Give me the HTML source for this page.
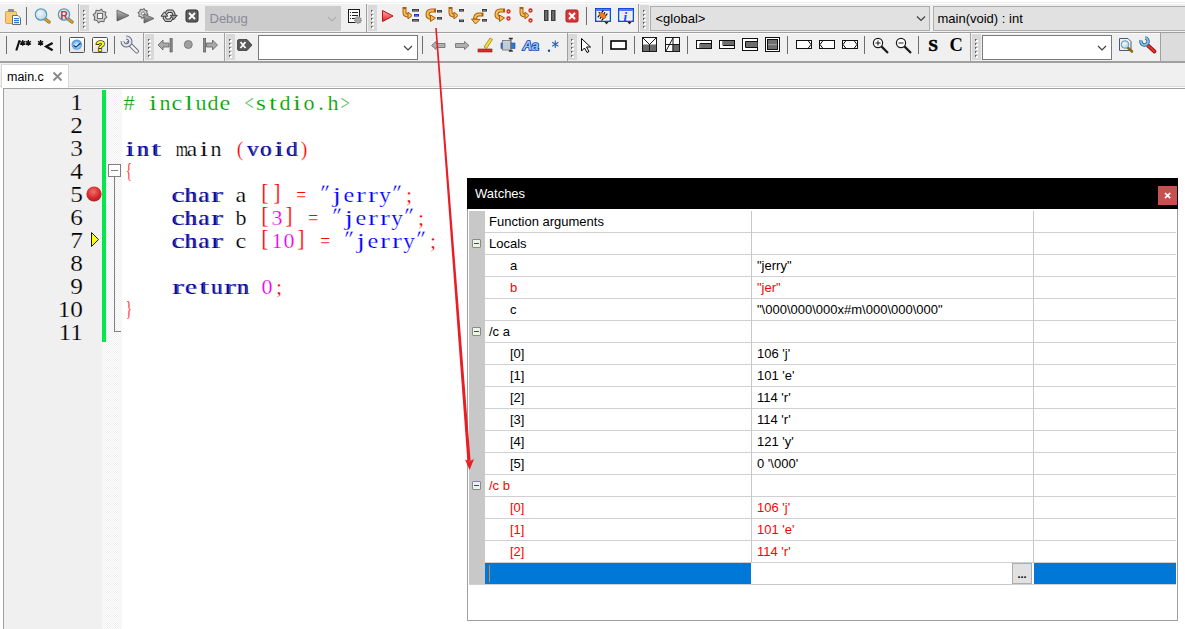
<!DOCTYPE html>
<html><head><meta charset="utf-8">
<style>
*{margin:0;padding:0;box-sizing:border-box}
html,body{width:1185px;height:629px;overflow:hidden;background:#fff;font-family:"Liberation Sans",sans-serif}
.a{position:absolute}
#tb1{position:absolute;left:0;top:4px;width:1185px;height:28px;background:#f0f0f0}
#l1{position:absolute;left:0;top:32px;width:1185px;height:1px;background:#a0a0a0}
#tb2{position:absolute;left:0;top:33px;width:1160px;height:28px;background:#f0f0f0}
#tb2r{position:absolute;left:1160px;top:33px;width:25px;height:28px;background:#dcdcdc}
#l2{position:absolute;left:0;top:61px;width:1185px;height:2px;background:#a0a0a0}
#tabbar{position:absolute;left:0;top:63px;width:1185px;height:25px;background:#f0f0f0}
#tab{position:absolute;left:1px;top:64px;width:68px;height:24px;background:#fff;border:1px solid #d9d9d9;border-bottom:none}
#tab span{position:absolute;left:5px;top:5px;font-size:12.5px;color:#000}
#tab b{position:absolute;left:51px;top:2px;font-size:14px;color:#808080;font-weight:bold}
#ed{position:absolute;left:3px;top:88px;width:1182px;height:541px;background:#fff;border-left:1px solid #a0a0a0;border-top:1px solid #a0a0a0}
#lnm{position:absolute;left:4px;top:89px;width:98px;height:540px;background:#f0f0f0}
#chg{position:absolute;left:102px;top:90px;width:4px;height:252px;background:#00e84a}
#fold{position:absolute;left:102px;top:89px;width:20px;height:540px;background-color:#fff;background-image:repeating-conic-gradient(#efefef 0 25%,#fff 0 50%);background-size:2px 2px}
.cl{position:absolute;left:0;height:23px;width:600px}
.cl i{position:absolute;top:0;width:12px;text-align:center;font-style:normal;font-family:"Liberation Serif",serif;font-size:22px;line-height:23px;-webkit-text-stroke:0.2px #fff}
.ln{position:absolute;left:5px;width:78px;text-align:right;font-family:"Liberation Serif",serif;font-size:22.6px;line-height:23px;color:#000;transform:scaleX(1.12);transform-origin:78px 0;-webkit-text-stroke:0.2px #f0f0f0}
.pp{color:#00a000}
.kw{color:#00009a;text-shadow:0.8px 0 0 #00009a}
.id{color:#000}
.op{color:#ff0000}
.num{color:#f000f0}
.str{color:#0000ff}
.wt{color:#fff;font-size:13px}
.wtx{font-size:13px;color:#000;white-space:pre}
.red{color:#f00}
.hl{left:485px;width:691px;height:1px;background:#d0d0d0}
.fb{width:9px;height:9px;border:1px solid #8a8a8a;background:#f0f0f0;border-radius:1px}
.fb:after{content:"";position:absolute;left:1px;top:3px;width:5px;height:1px;background:#2050a0}
</style></head><body>
<div id="tb1"></div><div id="l1"></div>
<div id="tb2"></div><div id="tb2r"></div><div id="l2"></div>
<div id="tabbar"></div><div class="a" style="left:0;top:86px;width:1185px;height:1px;background:#dadada"></div><div class="a" style="left:0;top:87px;width:1185px;height:1px;background:#fff"></div><div class="a" style="left:1160px;top:33px;width:1px;height:29px;background:#a0a0a0"></div>
<div id="tab"><span>main.c</span><svg class="a" style="left:50px;top:6px" width="12" height="11"><path d="M1.5 1.5 L9.5 9.5 M9.5 1.5 L1.5 9.5" stroke="#8a8a8a" stroke-width="1.9"/></svg></div>
<div id="ed"></div><div id="lnm"></div><div id="fold"></div><div id="chg"></div>

<svg class="a" style="left:0;top:0" width="1185" height="63">
<defs><linearGradient id="gg" x1="0" y1="0" x2="0" y2="1"><stop offset="0" stop-color="#bdbdbd"/><stop offset="1" stop-color="#5a5a5a"/></linearGradient><linearGradient id="rg" x1="0" y1="0" x2="0" y2="1"><stop offset="0" stop-color="#ffb0b0"/><stop offset="1" stop-color="#e02020"/></linearGradient><radialGradient id="mg" cx="0.4" cy="0.4" r="0.6"><stop offset="0" stop-color="#f4f8fb"/><stop offset="1" stop-color="#b8d4e4"/></radialGradient><linearGradient id="bg" x1="0" y1="0" x2="0" y2="1"><stop offset="0" stop-color="#ffffff"/><stop offset="1" stop-color="#e4e4e4"/></linearGradient><radialGradient id="glb" cx="0.5" cy="0.55" r="0.6"><stop offset="0" stop-color="#e8f8ff"/><stop offset="0.45" stop-color="#8cccf4"/><stop offset="1" stop-color="#2a72d0"/></radialGradient></defs>
<rect x="0" y="0" width="1185" height="4" fill="#fff"/><rect x="0" y="2" width="1185" height="1" fill="#eeeeee"/>
<rect x="5.5" y="11.5" width="11" height="12" rx="1" fill="#f5cd73" stroke="#d9a441"/><rect x="8" y="9" width="6" height="3" rx="1" fill="#8e8e8e"/><path d="M12.5 15.5 H18 L20.5 18 V24.5 H12.5 Z" fill="#fff" stroke="#6b6b73"/><rect x="14" y="18" width="5" height="1.2" fill="#2a7ad8"/><rect x="14" y="20" width="5" height="1.2" fill="#2a7ad8"/><rect x="14" y="22" width="5" height="1.2" fill="#2a7ad8"/>
<rect x="26" y="7" width="1" height="18" fill="#6d6d6d"/>
<line x1="44.5" y1="18.5" x2="49" y2="22" stroke="#8a6a10" stroke-width="3.4" stroke-linecap="round"/><line x1="44.5" y1="18.5" x2="49" y2="22" stroke="#c9a43a" stroke-width="2" stroke-linecap="round"/><circle cx="41" cy="14.5" r="5.7" fill="url(#mg)" stroke="#5b9bb8" stroke-width="1.2"/>
<line x1="67.5" y1="18.5" x2="72" y2="22" stroke="#8a6a10" stroke-width="3.4" stroke-linecap="round"/><line x1="67.5" y1="18.5" x2="72" y2="22" stroke="#c9a43a" stroke-width="2" stroke-linecap="round"/><circle cx="64" cy="14.5" r="5.7" fill="url(#mg)" stroke="#5b9bb8" stroke-width="1.2"/>
<text x="60.5" y="18.5" font-family="Liberation Sans" font-weight="bold" font-size="10" fill="#c03838">R</text>
<rect x="78" y="4" width="1" height="28" fill="#a0a0a0"/>
<rect x="80" y="5" width="9" height="26" fill="#d9d9d9"/><rect x="84" y="11" width="2" height="2" fill="#fff"/><path d="M83 10 h2 l-2 2 z" fill="#5a5a5a"/><rect x="83" y="10" width="1" height="1.5" fill="#5a5a5a"/><rect x="84" y="15" width="2" height="2" fill="#fff"/><path d="M83 14 h2 l-2 2 z" fill="#5a5a5a"/><rect x="83" y="14" width="1" height="1.5" fill="#5a5a5a"/><rect x="84" y="19" width="2" height="2" fill="#fff"/><path d="M83 18 h2 l-2 2 z" fill="#5a5a5a"/><rect x="83" y="18" width="1" height="1.5" fill="#5a5a5a"/><rect x="84" y="23" width="2" height="2" fill="#fff"/><path d="M83 22 h2 l-2 2 z" fill="#5a5a5a"/><rect x="83" y="22" width="1" height="1.5" fill="#5a5a5a"/><rect x="84" y="27" width="2" height="2" fill="#fff"/><path d="M83 26 h2 l-2 2 z" fill="#5a5a5a"/><rect x="83" y="26" width="1" height="1.5" fill="#5a5a5a"/>
<polygon points="106.86,17.39 104.48,19.02 103.87,21.83 101.03,21.30 98.61,22.86 96.98,20.48 94.17,19.87 94.70,17.03 93.14,14.61 95.52,12.98 96.13,10.17 98.97,10.70 101.39,9.14 103.02,11.52 105.83,12.13 105.30,14.97" fill="#cfcfcf" stroke="#6e6e6e" stroke-width="1.1" stroke-linejoin="round"/><rect x="97.5" y="13.5" width="5" height="5" fill="#f4f4f4" stroke="#6e6e6e"/>
<path d="M117 10 L129 15.5 L117 21 Z" fill="url(#gg)" stroke="#5a5a5a" stroke-width="0.8"/>
<polygon points="147.90,14.49 146.15,15.62 145.76,17.67 143.73,17.23 142.01,18.40 140.88,16.65 138.83,16.26 139.27,14.23 138.10,12.51 139.85,11.38 140.24,9.33 142.27,9.77 143.99,8.60 145.12,10.35 147.17,10.74 146.73,12.77" fill="#cfcfcf" stroke="#6e6e6e" stroke-width="1.1" stroke-linejoin="round"/><circle cx="143" cy="13.5" r="1.6" fill="#f4f4f4" stroke="#6e6e6e" stroke-width="0.8"/>
<path d="M144 14 L154 18.5 L144 23 Z" fill="url(#gg)" stroke="#5a5a5a" stroke-width="0.8"/>
<path d="M166 13.5 L167.8 11.2 H172.2 L173.8 13.6 V15.5" stroke="#3e3e3e" stroke-width="3.4" fill="none" stroke-linejoin="round"/><path d="M166 13.5 L167.8 11.2 H172.2 L173.8 13.6 V15.5" stroke="#c4c4c4" stroke-width="1.4" fill="none" stroke-linejoin="round"/>
<path d="M172.2 17.5 L170.4 20.3 H166 L164.4 18 V16" stroke="#3e3e3e" stroke-width="3.4" fill="none" stroke-linejoin="round"/><path d="M172.2 17.5 L170.4 20.3 H166 L164.4 18 V16" stroke="#c4c4c4" stroke-width="1.4" fill="none" stroke-linejoin="round"/>
<path d="M170.3 15.3 H177.2 L173.75 19.8 Z" fill="#9a9a9a" stroke="#3e3e3e" stroke-width="1" stroke-linejoin="round"/><path d="M161 16.2 H167.8 L164.4 11.8 Z" fill="#c8c8c8" stroke="#3e3e3e" stroke-width="1" stroke-linejoin="round"/>
<rect x="186" y="10" width="12" height="12" rx="2" fill="#5e5e5e" stroke="#2e2e2e"/><path d="M189 13 L195 19 M195 13 L189 19" stroke="#fff" stroke-width="1.8"/>
<rect x="205" y="6" width="136" height="25" fill="#cccccc"/>
<text x="209.5" y="22.5" font-family="Liberation Sans" font-size="13" fill="#8a8a9a">Debug</text>
<path d="M328 17 L332 21 L336 17" stroke="#b0b0b0" stroke-width="1.2" fill="none"/>
<rect x="348.5" y="9.5" width="11" height="13" fill="#fff" stroke="#1a1a1a"/><rect x="350" y="12" width="1" height="1" fill="#222"/><rect x="352" y="12" width="6" height="1" fill="#222"/><rect x="350" y="15" width="1" height="1" fill="#222"/><rect x="352" y="15" width="6" height="1" fill="#222"/><rect x="350" y="18" width="1" height="1" fill="#222"/><rect x="352" y="18" width="4" height="1" fill="#222"/><circle cx="358" cy="20" r="3.2" fill="#a8a8a8" stroke="#8a8a8a" stroke-width="1.4" stroke-dasharray="1.2 1"/>
<rect x="366" y="4" width="1" height="28" fill="#a0a0a0"/>
<rect x="368" y="5" width="9" height="26" fill="#d9d9d9"/><rect x="372" y="11" width="2" height="2" fill="#fff"/><path d="M371 10 h2 l-2 2 z" fill="#5a5a5a"/><rect x="371" y="10" width="1" height="1.5" fill="#5a5a5a"/><rect x="372" y="15" width="2" height="2" fill="#fff"/><path d="M371 14 h2 l-2 2 z" fill="#5a5a5a"/><rect x="371" y="14" width="1" height="1.5" fill="#5a5a5a"/><rect x="372" y="19" width="2" height="2" fill="#fff"/><path d="M371 18 h2 l-2 2 z" fill="#5a5a5a"/><rect x="371" y="18" width="1" height="1.5" fill="#5a5a5a"/><rect x="372" y="23" width="2" height="2" fill="#fff"/><path d="M371 22 h2 l-2 2 z" fill="#5a5a5a"/><rect x="371" y="22" width="1" height="1.5" fill="#5a5a5a"/><rect x="372" y="27" width="2" height="2" fill="#fff"/><path d="M371 26 h2 l-2 2 z" fill="#5a5a5a"/><rect x="371" y="26" width="1" height="1.5" fill="#5a5a5a"/>
<path d="M382.5 10.5 L393 16 L382.5 21.5 Z" fill="url(#rg)" stroke="#c01010" stroke-width="1"/>
<path d="M404.5 9 V12.5 Q404.5 15.5 408.5 15.5" stroke="#a86008" stroke-width="4" fill="none" stroke-linecap="square" stroke-linejoin="round"/><path d="M404.5 9 V12.5 Q404.5 15.5 408.5 15.5" stroke="#f9be5a" stroke-width="2" fill="none" stroke-linecap="butt" stroke-linejoin="round"/><path d="M408 12 L412 15.5 L408 19 Z" fill="#f9be5a" stroke="#a86008" stroke-width="1" stroke-linejoin="round"/>
<rect x="411.5" y="8.5" width="8" height="3.6" fill="#fff" opacity="0.7"/><rect x="412" y="9" width="7" height="2.6" fill="#3a3a3a"/><rect x="413" y="9.9" width="5" height="0.8" fill="#8a8a8a"/><rect x="413.5" y="13.5" width="6" height="3.6" fill="#fff" opacity="0.7"/><rect x="414" y="14" width="5" height="2.6" fill="#1828e8"/><rect x="415" y="14.9" width="3" height="0.8" fill="#6080ff"/><rect x="411.5" y="18.5" width="8" height="3.6" fill="#fff" opacity="0.7"/><rect x="412" y="19" width="7" height="2.6" fill="#3a3a3a"/><rect x="413" y="19.9" width="5" height="0.8" fill="#8a8a8a"/>
<path d="M434 10.5 H431.5 Q427.5 10.5 427.5 14.5 Q427.5 17.5 431 18" stroke="#a86008" stroke-width="4" fill="none" stroke-linecap="square" stroke-linejoin="round"/><path d="M434 10.5 H431.5 Q427.5 10.5 427.5 14.5 Q427.5 17.5 431 18" stroke="#f9be5a" stroke-width="2" fill="none" stroke-linecap="butt" stroke-linejoin="round"/><path d="M430.5 15 L435.5 18 L430.5 21.5 Z" fill="#f9be5a" stroke="#a86008" stroke-width="1" stroke-linejoin="round"/>
<rect x="436.5" y="9.5" width="6" height="3.6" fill="#fff" opacity="0.7"/><rect x="437" y="10" width="5" height="2.6" fill="#3a3a3a"/><rect x="438" y="10.9" width="3" height="0.8" fill="#8a8a8a"/><rect x="436.5" y="16.5" width="6" height="3.6" fill="#fff" opacity="0.7"/><rect x="437" y="17" width="5" height="2.6" fill="#3a3a3a"/><rect x="438" y="17.9" width="3" height="0.8" fill="#8a8a8a"/>
<path d="M450.5 9 V12.5 Q450.5 15.5 454.5 15.5" stroke="#a86008" stroke-width="4" fill="none" stroke-linecap="square" stroke-linejoin="round"/><path d="M450.5 9 V12.5 Q450.5 15.5 454.5 15.5" stroke="#f9be5a" stroke-width="2" fill="none" stroke-linecap="butt" stroke-linejoin="round"/><path d="M454 12 L458 15.5 L454 19 Z" fill="#f9be5a" stroke="#a86008" stroke-width="1" stroke-linejoin="round"/>
<rect x="458.5" y="8.5" width="6" height="3.6" fill="#fff" opacity="0.7"/><rect x="459" y="9" width="5" height="2.6" fill="#3a3a3a"/><rect x="460" y="9.9" width="3" height="0.8" fill="#8a8a8a"/><rect x="458.5" y="19.0" width="6" height="3.6" fill="#fff" opacity="0.7"/><rect x="459" y="19.5" width="5" height="2.6" fill="#3a3a3a"/><rect x="460" y="20.4" width="3" height="0.8" fill="#8a8a8a"/>
<path d="M481.5 14.5 H479 Q475.5 14.5 475 18.5" stroke="#a86008" stroke-width="4" fill="none" stroke-linecap="square" stroke-linejoin="round"/><path d="M481.5 14.5 H479 Q475.5 14.5 475 18.5" stroke="#f9be5a" stroke-width="2" fill="none" stroke-linecap="butt" stroke-linejoin="round"/><path d="M471.5 19 L480 19.5 L475.5 24 Z" fill="#f9be5a" stroke="#a86008" stroke-width="1" stroke-linejoin="round"/>
<rect x="481.5" y="8.5" width="6" height="3.6" fill="#fff" opacity="0.7"/><rect x="482" y="9" width="5" height="2.6" fill="#3a3a3a"/><rect x="483" y="9.9" width="3" height="0.8" fill="#8a8a8a"/><rect x="481.5" y="18.5" width="6" height="3.6" fill="#fff" opacity="0.7"/><rect x="482" y="19" width="5" height="2.6" fill="#3a3a3a"/><rect x="483" y="19.9" width="3" height="0.8" fill="#8a8a8a"/>
<path d="M503 10.5 H500.5 Q496.5 10.5 496.5 14.5 Q496.5 17.5 500 18" stroke="#a86008" stroke-width="4" fill="none" stroke-linecap="square" stroke-linejoin="round"/><path d="M503 10.5 H500.5 Q496.5 10.5 496.5 14.5 Q496.5 17.5 500 18" stroke="#f9be5a" stroke-width="2" fill="none" stroke-linecap="butt" stroke-linejoin="round"/><path d="M499.5 15 L504.5 18 L499.5 21.5 Z" fill="#f9be5a" stroke="#a86008" stroke-width="1" stroke-linejoin="round"/>
<circle cx="508.5" cy="11.5" r="1.5" fill="#f8e0a0" stroke="#e01818" stroke-width="1.3"/><circle cx="508.5" cy="18.5" r="1.5" fill="#f8e0a0" stroke="#e01818" stroke-width="1.3"/>
<path d="M521.5 9 V12.5 Q521.5 15.5 525.5 15.5" stroke="#a86008" stroke-width="4" fill="none" stroke-linecap="square" stroke-linejoin="round"/><path d="M521.5 9 V12.5 Q521.5 15.5 525.5 15.5" stroke="#f9be5a" stroke-width="2" fill="none" stroke-linecap="butt" stroke-linejoin="round"/><path d="M525 12 L529 15.5 L525 19 Z" fill="#f9be5a" stroke="#a86008" stroke-width="1" stroke-linejoin="round"/>
<circle cx="530.5" cy="10.5" r="1.5" fill="#f8e0a0" stroke="#e01818" stroke-width="1.3"/><circle cx="530.5" cy="20.5" r="1.5" fill="#f8e0a0" stroke="#e01818" stroke-width="1.3"/>
<rect x="544" y="10" width="4.5" height="11" fill="#3a3a3a"/><rect x="545.2" y="11" width="2" height="9" fill="#6e6e6e"/><rect x="551" y="10" width="4.5" height="11" fill="#3a3a3a"/><rect x="552.2" y="11" width="2" height="9" fill="#6e6e6e"/>
<rect x="566" y="10" width="12" height="12" rx="1.5" fill="#d83838" stroke="#b01818"/><path d="M569 13 L575 19 M575 13 L569 19" stroke="#fff" stroke-width="2"/>
<rect x="586" y="7" width="1" height="18" fill="#6d6d6d"/>
<rect x="595.75" y="8.75" width="14.5" height="12.5" fill="#ececec" stroke="#0c4ed8" stroke-width="1.5"/><rect x="597" y="11" width="12" height="9" fill="none" stroke="#fff" stroke-width="0.8"/><rect x="596.5" y="9.5" width="13" height="1.4" fill="#3a60f0"/><path d="M604.5 22 L608.5 22 L606.5 24.5 Z" fill="#222"/>
<rect x="618.75" y="8.75" width="14.5" height="12.5" fill="#ececec" stroke="#0c4ed8" stroke-width="1.5"/><rect x="620" y="11" width="12" height="9" fill="none" stroke="#fff" stroke-width="0.8"/><rect x="619.5" y="9.5" width="13" height="1.4" fill="#3a60f0"/><path d="M627.5 22 L631.5 22 L629.5 24.5 Z" fill="#222"/>
<g transform="rotate(40 602.5 15.5)"><path d="M600 11 V20 M602.5 11.5 V19.5 M605 11 V20 M597.5 15.5 H599" stroke="#111" stroke-width="1.2"/><ellipse cx="602.5" cy="15.5" rx="3.8" ry="2.2" fill="#f08018" stroke="#b05000" stroke-width="0.5"/></g>
<text x="623.5" y="20.5" font-family="Liberation Serif" font-style="italic" font-weight="bold" font-size="13" fill="#2a3cff">i</text>
<rect x="638" y="4" width="1" height="28" fill="#a0a0a0"/>
<rect x="640" y="5" width="9" height="26" fill="#d9d9d9"/><rect x="644" y="11" width="2" height="2" fill="#fff"/><path d="M643 10 h2 l-2 2 z" fill="#5a5a5a"/><rect x="643" y="10" width="1" height="1.5" fill="#5a5a5a"/><rect x="644" y="15" width="2" height="2" fill="#fff"/><path d="M643 14 h2 l-2 2 z" fill="#5a5a5a"/><rect x="643" y="14" width="1" height="1.5" fill="#5a5a5a"/><rect x="644" y="19" width="2" height="2" fill="#fff"/><path d="M643 18 h2 l-2 2 z" fill="#5a5a5a"/><rect x="643" y="18" width="1" height="1.5" fill="#5a5a5a"/><rect x="644" y="23" width="2" height="2" fill="#fff"/><path d="M643 22 h2 l-2 2 z" fill="#5a5a5a"/><rect x="643" y="22" width="1" height="1.5" fill="#5a5a5a"/><rect x="644" y="27" width="2" height="2" fill="#fff"/><path d="M643 26 h2 l-2 2 z" fill="#5a5a5a"/><rect x="643" y="26" width="1" height="1.5" fill="#5a5a5a"/>
<rect x="650.5" y="6.5" width="279" height="24" fill="#e1e1e1" stroke="#adadad"/>
<text x="655.5" y="22.5" font-family="Liberation Sans" font-size="13" fill="#000">&lt;global&gt;</text>
<path d="M917 16.5 L921 20.5 L925 16.5" stroke="#404040" stroke-width="1.2" fill="none"/>
<rect x="933.5" y="6.5" width="260" height="24" fill="#e1e1e1" stroke="#adadad"/>
<text x="937.5" y="22.5" font-family="Liberation Sans" font-size="13" fill="#000">main(void) : int</text>
<rect x="0" y="32" width="1185" height="1" fill="#a0a0a0"/><rect x="0" y="33" width="1160" height="1" fill="#fbfbfb"/>
<rect x="6" y="36" width="1" height="18" fill="#6d6d6d"/>
<path d="M16.3 50.5 L19.6 40.2" stroke="#111" stroke-width="2.1"/><path d="M22.7 39.9 V45.699999999999996 M20.099999999999998 41.3 L25.3 44.3 M25.3 41.3 L20.099999999999998 44.3" stroke="#111" stroke-width="1.35"/><path d="M28.3 39.9 V45.699999999999996 M25.7 41.3 L30.900000000000002 44.3 M30.900000000000002 41.3 L25.7 44.3" stroke="#111" stroke-width="1.35"/><path d="M40.6 39.9 V45.699999999999996 M38.0 41.3 L43.2 44.3 M43.2 41.3 L38.0 44.3" stroke="#111" stroke-width="1.35"/><path d="M52.6 43 L46.2 46.6 L52.6 50.2" stroke="#111" stroke-width="2.3" fill="none"/>
<rect x="60" y="36" width="1" height="18" fill="#6d6d6d"/>
<rect x="69.5" y="37.5" width="15" height="15" rx="1" fill="url(#bg)" stroke="#505050"/><circle cx="76.8" cy="44.6" r="5.2" fill="url(#glb)"/><path d="M73.5 45.5 L76 47 L80.5 43.2" stroke="#1a3a88" stroke-width="1.2" fill="none"/>
<rect x="92.5" y="37.5" width="15" height="15" rx="1" fill="url(#bg)" stroke="#505050"/><text x="95.8" y="51" font-family="Liberation Sans" font-weight="bold" font-size="15" fill="#ffff20" stroke="#3a3a00" stroke-width="1.6" paint-order="stroke">?</text>
<rect x="114" y="36" width="1" height="18" fill="#6d6d6d"/>
<path d="M128.5 43 L136.8 51.3" stroke="#6a6a7a" stroke-width="4.4" stroke-linecap="round"/><path d="M128.5 43 L136.8 51.3" stroke="#f4f4fa" stroke-width="2.4" stroke-linecap="round"/><path d="M126.36 37.60 A3.9 3.9 0 1 1 122.60 41.36" stroke="#6a6a7a" stroke-width="4.2" fill="none"/><path d="M126.36 37.60 A3.9 3.9 0 1 1 122.60 41.36" stroke="#e4e6f4" stroke-width="2.2" fill="none"/>
<rect x="143" y="33" width="1" height="28" fill="#a0a0a0"/>
<rect x="145" y="34" width="9" height="26" fill="#d9d9d9"/><rect x="149" y="40" width="2" height="2" fill="#fff"/><path d="M148 39 h2 l-2 2 z" fill="#5a5a5a"/><rect x="148" y="39" width="1" height="1.5" fill="#5a5a5a"/><rect x="149" y="44" width="2" height="2" fill="#fff"/><path d="M148 43 h2 l-2 2 z" fill="#5a5a5a"/><rect x="148" y="43" width="1" height="1.5" fill="#5a5a5a"/><rect x="149" y="48" width="2" height="2" fill="#fff"/><path d="M148 47 h2 l-2 2 z" fill="#5a5a5a"/><rect x="148" y="47" width="1" height="1.5" fill="#5a5a5a"/><rect x="149" y="52" width="2" height="2" fill="#fff"/><path d="M148 51 h2 l-2 2 z" fill="#5a5a5a"/><rect x="148" y="51" width="1" height="1.5" fill="#5a5a5a"/><rect x="149" y="56" width="2" height="2" fill="#fff"/><path d="M148 55 h2 l-2 2 z" fill="#5a5a5a"/><rect x="148" y="55" width="1" height="1.5" fill="#5a5a5a"/>
<path d="M158 45 L163 40 V43 H169 V47 H163 V50 Z" fill="#a8a8a8" stroke="#606060" stroke-width="0.8"/><rect x="170" y="38.5" width="2.2" height="13.5" fill="#8a8a8a" stroke="#505050" stroke-width="0.6"/>
<circle cx="188.3" cy="44.5" r="4" fill="#a0a0a0" stroke="#707070" stroke-width="0.8"/>
<rect x="203.5" y="38.5" width="2.2" height="13.5" fill="#8a8a8a" stroke="#505050" stroke-width="0.6"/><path d="M217.5 45 L212.5 40 V43 H206.5 V47 H212.5 V50 Z" fill="#a8a8a8" stroke="#606060" stroke-width="0.8"/>
<rect x="224" y="33" width="1" height="28" fill="#a0a0a0"/>
<rect x="226" y="34" width="9" height="26" fill="#d9d9d9"/><rect x="230" y="40" width="2" height="2" fill="#fff"/><path d="M229 39 h2 l-2 2 z" fill="#5a5a5a"/><rect x="229" y="39" width="1" height="1.5" fill="#5a5a5a"/><rect x="230" y="44" width="2" height="2" fill="#fff"/><path d="M229 43 h2 l-2 2 z" fill="#5a5a5a"/><rect x="229" y="43" width="1" height="1.5" fill="#5a5a5a"/><rect x="230" y="48" width="2" height="2" fill="#fff"/><path d="M229 47 h2 l-2 2 z" fill="#5a5a5a"/><rect x="229" y="47" width="1" height="1.5" fill="#5a5a5a"/><rect x="230" y="52" width="2" height="2" fill="#fff"/><path d="M229 51 h2 l-2 2 z" fill="#5a5a5a"/><rect x="229" y="51" width="1" height="1.5" fill="#5a5a5a"/><rect x="230" y="56" width="2" height="2" fill="#fff"/><path d="M229 55 h2 l-2 2 z" fill="#5a5a5a"/><rect x="229" y="55" width="1" height="1.5" fill="#5a5a5a"/>
<path d="M237.5 41 Q237.5 39.5 239 39.5 H247 L252 45 L247 50.5 H239 Q237.5 50.5 237.5 49 Z" fill="#5a5a5a" stroke="#3a3a3a" stroke-width="0.8"/><path d="M240.5 42 L245.5 48 M245.5 42 L240.5 48" stroke="#fff" stroke-width="1.8"/>
<rect x="258.5" y="35.5" width="159" height="24" fill="#fff" stroke="#7a7a7a"/>
<path d="M404 46 L408 50 L412 46" stroke="#404040" stroke-width="1.2" fill="none"/>
<rect x="422" y="36" width="1" height="18" fill="#6d6d6d"/>
<path d="M431.5 45.5 L436 41.5 V43.5 H445 V47.5 H436 V49.5 Z" fill="#b0b0b0" stroke="#6a6a6a" stroke-width="0.8"/>
<path d="M469 45.5 L464.5 41.5 V43.5 H455.5 V47.5 H464.5 V49.5 Z" fill="#b0b0b0" stroke="#6a6a6a" stroke-width="0.8"/>
<path d="M484 47 L490 38 L492.5 39.5 L486.5 48.5 Z" fill="#f4d840" stroke="#9a8a10" stroke-width="0.8"/><rect x="478" y="49" width="14" height="3" fill="#e02828" stroke="#a01010" stroke-width="0.6"/>
<rect x="501" y="43" width="14" height="5.5" fill="#2a7ad8" stroke="#1a4aa0" stroke-width="0.6"/><rect x="502.5" y="40.5" width="8" height="9.5" fill="#c8d0dc" stroke="#6a6a6a" stroke-width="0.8" opacity="0.95"/><path d="M510.8 38.8 V50.6 M508.8 38.5 H512.8 M508.8 51 H512.8" stroke="#303030" stroke-width="1.4"/><path d="M510.8 39.5 V50" stroke="#e0e0e0" stroke-width="0.6"/>
<text x="522.8" y="50.2" font-family="Liberation Sans" font-style="italic" font-weight="bold" font-size="13" fill="#9cc4f4" stroke="#0c3ca8" stroke-width="1.6" paint-order="stroke" letter-spacing="-0.6">Aa</text>
<circle cx="549" cy="50.8" r="1.2" fill="#1a4aa8"/><path d="M555.3 40.5 V48 M552.2 42.3 L558.4 46.2 M558.4 42.3 L552.2 46.2" stroke="#2a62b8" stroke-width="1.1"/>
<rect x="567" y="33" width="1" height="28" fill="#a0a0a0"/>
<rect x="568" y="34" width="9" height="26" fill="#d9d9d9"/><rect x="572" y="40" width="2" height="2" fill="#fff"/><path d="M571 39 h2 l-2 2 z" fill="#5a5a5a"/><rect x="571" y="39" width="1" height="1.5" fill="#5a5a5a"/><rect x="572" y="44" width="2" height="2" fill="#fff"/><path d="M571 43 h2 l-2 2 z" fill="#5a5a5a"/><rect x="571" y="43" width="1" height="1.5" fill="#5a5a5a"/><rect x="572" y="48" width="2" height="2" fill="#fff"/><path d="M571 47 h2 l-2 2 z" fill="#5a5a5a"/><rect x="571" y="47" width="1" height="1.5" fill="#5a5a5a"/><rect x="572" y="52" width="2" height="2" fill="#fff"/><path d="M571 51 h2 l-2 2 z" fill="#5a5a5a"/><rect x="571" y="51" width="1" height="1.5" fill="#5a5a5a"/><rect x="572" y="56" width="2" height="2" fill="#fff"/><path d="M571 55 h2 l-2 2 z" fill="#5a5a5a"/><rect x="571" y="55" width="1" height="1.5" fill="#5a5a5a"/>
<path d="M581.5 38.5 V51 L584.5 48 L587 52.5 L589 51.5 L586.5 47 H590.5 Z" fill="#fff" stroke="#000" stroke-width="1"/>
<rect x="602" y="36" width="1" height="18" fill="#6d6d6d"/>
<rect x="611" y="41" width="15" height="8" fill="#fff" stroke="#000" stroke-width="1.6"/>
<rect x="634" y="36" width="1" height="18" fill="#6d6d6d"/>
<rect x="642.5" y="37.5" width="14" height="14" fill="#fff" stroke="#1a1a1a"/><rect x="643" y="44.5" width="13" height="6.5" fill="#6a6a6a"/><path d="M643 38 L649.5 44.5 L656 38" stroke="#1a1a1a" fill="none"/><rect x="649" y="44" width="1" height="7" fill="#1a1a1a"/>
<rect x="665.5" y="37.5" width="14" height="14" fill="#fff" stroke="#1a1a1a"/><rect x="672.5" y="44.5" width="6.5" height="6.5" fill="#6a6a6a"/><rect x="672.5" y="38" width="1" height="13" fill="#1a1a1a"/><rect x="666" y="44" width="13" height="1" fill="#1a1a1a"/><path d="M666 51 L673 38" stroke="#1a1a1a"/>
<rect x="687" y="36" width="1" height="18" fill="#6d6d6d"/>
<rect x="696.5" y="40.5" width="15" height="8" fill="#fff" stroke="#111"/><path d="M700 48.5 V43.5 H711.5" stroke="#111" fill="none"/><rect x="700.5" y="44" width="10.5" height="4" fill="#6e6e6e"/>
<rect x="719.5" y="40.5" width="15" height="8" fill="#fff" stroke="#111"/><path d="M723 41 V45.5 H734" stroke="#111" fill="none"/><rect x="723.5" y="41" width="10.5" height="4" fill="#6e6e6e"/>
<rect x="742.5" y="38.5" width="15" height="12" fill="#fff" stroke="#111"/><path d="M758 41.5 H745.5 V47.5 H758" stroke="#111" fill="none"/><rect x="746" y="42" width="11.5" height="5" fill="#6e6e6e"/>
<rect x="765.5" y="37.5" width="14" height="14" fill="#fff" stroke="#111"/><rect x="767.5" y="39.5" width="10" height="10" fill="#6e6e6e" stroke="#111"/><rect x="768" y="44" width="9" height="1.2" fill="#fff"/><rect x="768" y="44.6" width="9" height="0.6" fill="#111"/>
<rect x="787" y="36" width="1" height="18" fill="#6d6d6d"/>
<rect x="796.5" y="40.5" width="15" height="8" fill="#fff" stroke="#111"/><path d="M808 40.5 L811 44.5 L808 48.5" stroke="#111" fill="none"/>
<rect x="819.5" y="40.5" width="15" height="8" fill="#fff" stroke="#111"/><path d="M823 40.5 L820 44.5 L823 48.5" stroke="#111" fill="none"/>
<rect x="842.5" y="40.5" width="15" height="8" fill="#fff" stroke="#111"/><path d="M846 40.5 L843 44.5 L846 48.5 M854 40.5 L857 44.5 L854 48.5" stroke="#111" fill="none"/>
<rect x="864" y="36" width="1" height="18" fill="#6d6d6d"/>
<circle cx="878" cy="43" r="4.6" fill="#fff" stroke="#1a1a1a" stroke-width="1.2"/><line x1="881.4" y1="46.4" x2="888" y2="53" stroke="#1a1a1a" stroke-width="2.2"/><line x1="875.5" y1="43" x2="880.5" y2="43" stroke="#1a1a1a" stroke-width="1"/>
<line x1="878" y1="40.5" x2="878" y2="45.5" stroke="#1a1a1a" stroke-width="1"/>
<circle cx="901" cy="43" r="4.6" fill="#fff" stroke="#1a1a1a" stroke-width="1.2"/><line x1="904.4" y1="46.4" x2="911" y2="53" stroke="#1a1a1a" stroke-width="2.2"/><line x1="898.5" y1="43" x2="903.5" y2="43" stroke="#1a1a1a" stroke-width="1"/>
<rect x="918" y="36" width="1" height="18" fill="#6d6d6d"/>
<text x="928.3" y="50.8" font-family="Liberation Serif" font-weight="bold" font-size="17.5" fill="#000" stroke="#000" stroke-width="0.5">S</text>
<text x="949.6" y="51.2" font-family="Liberation Serif" font-weight="bold" font-size="18.5" fill="#000">C</text>
<rect x="970" y="33" width="1" height="28" fill="#a0a0a0"/>
<rect x="972" y="34" width="9" height="26" fill="#d9d9d9"/><rect x="976" y="40" width="2" height="2" fill="#fff"/><path d="M975 39 h2 l-2 2 z" fill="#5a5a5a"/><rect x="975" y="39" width="1" height="1.5" fill="#5a5a5a"/><rect x="976" y="44" width="2" height="2" fill="#fff"/><path d="M975 43 h2 l-2 2 z" fill="#5a5a5a"/><rect x="975" y="43" width="1" height="1.5" fill="#5a5a5a"/><rect x="976" y="48" width="2" height="2" fill="#fff"/><path d="M975 47 h2 l-2 2 z" fill="#5a5a5a"/><rect x="975" y="47" width="1" height="1.5" fill="#5a5a5a"/><rect x="976" y="52" width="2" height="2" fill="#fff"/><path d="M975 51 h2 l-2 2 z" fill="#5a5a5a"/><rect x="975" y="51" width="1" height="1.5" fill="#5a5a5a"/><rect x="976" y="56" width="2" height="2" fill="#fff"/><path d="M975 55 h2 l-2 2 z" fill="#5a5a5a"/><rect x="975" y="55" width="1" height="1.5" fill="#5a5a5a"/>
<rect x="982.5" y="35.5" width="129" height="24" fill="#fff" stroke="#7a7a7a"/>
<path d="M1098 46 L1102 50 L1106 46" stroke="#404040" stroke-width="1.2" fill="none"/>
<path d="M1119.5 38.5 H1128 L1131 41.5 V50.5 H1119.5 Z" fill="#f0f0f0" stroke="#4a5a7a"/><line x1="1127" y1="47" x2="1132" y2="51.5" stroke="#8a6a10" stroke-width="2.6" stroke-linecap="round"/><circle cx="1125" cy="44.5" r="3.8" fill="url(#mg)" stroke="#5b9bb8" stroke-width="1"/>
<line x1="1148" y1="45.5" x2="1154.5" y2="51.5" stroke="#901010" stroke-width="3.8" stroke-linecap="round"/><line x1="1148" y1="45.5" x2="1154.5" y2="51.5" stroke="#e83030" stroke-width="2.2" stroke-linecap="round"/><path d="M1145.1 37.9 A3.6 3.6 0 1 1 1141.1 40.3" stroke="#2a6a98" stroke-width="3.4" fill="none"/><path d="M1145.1 37.9 A3.6 3.6 0 1 1 1141.1 40.3" stroke="#8ac4e8" stroke-width="1.6" fill="none"/>
</svg>
<div class="cl" style="top:91px"><i class="pp" style="left:123px;width:12px">#</i><i class="pp" style="left:147px;width:12px;transform:scaleX(1.3)">i</i><i class="pp" style="left:159px;width:12px">n</i><i class="pp" style="left:171px;width:12px;transform:scaleX(1.1)">c</i><i class="pp" style="left:183px;width:12px;transform:scaleX(1.35)">l</i><i class="pp" style="left:195px;width:12px">u</i><i class="pp" style="left:207px;width:12px">d</i><i class="pp" style="left:219px;width:12px;transform:scaleX(1.1)">e</i><i class="pp" style="left:243px;width:12px;transform:scaleX(0.75)">&lt;</i><i class="pp" style="left:255px;width:12px;transform:scaleX(1.15)">s</i><i class="pp" style="left:267px;width:12px;transform:scaleX(1.3)">t</i><i class="pp" style="left:279px;width:12px">d</i><i class="pp" style="left:291px;width:12px;transform:scaleX(1.3)">i</i><i class="pp" style="left:303px;width:12px">o</i><i class="pp" style="left:315px;width:12px">.</i><i class="pp" style="left:327px;width:12px">h</i><i class="pp" style="left:339px;width:12px;transform:scaleX(0.75)">&gt;</i></div>
<div class="ln" style="top:91px">1</div>
<div class="cl" style="top:114px"></div>
<div class="ln" style="top:114px">2</div>
<div class="cl" style="top:137px"><i class="kw" style="left:123px;width:13px;transform:scaleX(1.4)">i</i><i class="kw" style="left:136px;width:13px;transform:scaleX(1.08)">n</i><i class="kw" style="left:149px;width:13px;transform:scaleX(1.45)">t</i><i class="id" style="left:174px;width:12px;transform:scaleX(0.72)">m</i><i class="id" style="left:186px;width:12px;transform:scaleX(1.1)">a</i><i class="id" style="left:198px;width:12px;transform:scaleX(1.3)">i</i><i class="id" style="left:210px;width:12px">n</i><i class="op" style="left:234px;width:12px;transform:scaleX(0.9)">(</i><i class="kw" style="left:246px;width:13px;transform:scaleX(1.05)">v</i><i class="kw" style="left:259px;width:13px;transform:scaleX(1.05)">o</i><i class="kw" style="left:272px;width:13px;transform:scaleX(1.4)">i</i><i class="kw" style="left:285px;width:13px;transform:scaleX(1.05)">d</i><i class="op" style="left:298px;width:12px;transform:scaleX(0.9)">)</i></div>
<div class="ln" style="top:137px">3</div>
<div class="cl" style="top:160px"><i class="op" style="left:123px;width:12px;transform:translateY(-2px) scaleX(0.6)">{</i></div>
<div class="ln" style="top:160px">4</div>
<div class="cl" style="top:183px"><i class="kw" style="left:171px;width:13px;transform:scaleX(1.3)">c</i><i class="kw" style="left:184px;width:13px;transform:scaleX(1.12)">h</i><i class="kw" style="left:197px;width:13px;transform:scaleX(1.15)">a</i><i class="kw" style="left:210px;width:13px;transform:scaleX(1.55)">r</i><i class="id" style="left:235px;width:12px;transform:scaleX(1.1)">a</i><i class="op" style="left:259px;width:12px;transform:translateY(-2.5px) scaleY(1.08)">[</i><i class="op" style="left:271px;width:12px;transform:translateY(-2.5px) scaleY(1.08)">]</i><i class="op" style="left:295px;width:12px;transform:scaleX(0.8)">=</i><i class="str" style="left:319px;width:12px;transform:translate(-2px,-2px) skewX(-22deg)">"</i><i class="str" style="left:331px;width:12px;transform:scaleX(1.35)">j</i><i class="str" style="left:343px;width:12px;transform:scaleX(1.1)">e</i><i class="str" style="left:355px;width:12px;transform:scaleX(1.35)">r</i><i class="str" style="left:367px;width:12px;transform:scaleX(1.35)">r</i><i class="str" style="left:379px;width:12px;transform:scaleX(1.05)">y</i><i class="str" style="left:391px;width:12px;transform:translate(-2px,-2px) skewX(-22deg)">"</i><i class="op" style="left:403px;width:12px">;</i></div>
<div class="ln" style="top:183px">5</div>
<div class="cl" style="top:206px"><i class="kw" style="left:171px;width:13px;transform:scaleX(1.3)">c</i><i class="kw" style="left:184px;width:13px;transform:scaleX(1.12)">h</i><i class="kw" style="left:197px;width:13px;transform:scaleX(1.15)">a</i><i class="kw" style="left:210px;width:13px;transform:scaleX(1.55)">r</i><i class="id" style="left:235px;width:12px">b</i><i class="op" style="left:259px;width:12px;transform:translateY(-2.5px) scaleY(1.08)">[</i><i class="num" style="left:271px;width:12px">3</i><i class="op" style="left:283px;width:12px;transform:translateY(-2.5px) scaleY(1.08)">]</i><i class="op" style="left:307px;width:12px;transform:scaleX(0.8)">=</i><i class="str" style="left:331px;width:12px;transform:translate(-2px,-2px) skewX(-22deg)">"</i><i class="str" style="left:343px;width:12px;transform:scaleX(1.35)">j</i><i class="str" style="left:355px;width:12px;transform:scaleX(1.1)">e</i><i class="str" style="left:367px;width:12px;transform:scaleX(1.35)">r</i><i class="str" style="left:379px;width:12px;transform:scaleX(1.35)">r</i><i class="str" style="left:391px;width:12px;transform:scaleX(1.05)">y</i><i class="str" style="left:403px;width:12px;transform:translate(-2px,-2px) skewX(-22deg)">"</i><i class="op" style="left:415px;width:12px">;</i></div>
<div class="ln" style="top:206px">6</div>
<div class="cl" style="top:229px"><i class="kw" style="left:171px;width:13px;transform:scaleX(1.3)">c</i><i class="kw" style="left:184px;width:13px;transform:scaleX(1.12)">h</i><i class="kw" style="left:197px;width:13px;transform:scaleX(1.15)">a</i><i class="kw" style="left:210px;width:13px;transform:scaleX(1.55)">r</i><i class="id" style="left:235px;width:12px;transform:scaleX(1.1)">c</i><i class="op" style="left:259px;width:12px;transform:translateY(-2.5px) scaleY(1.08)">[</i><i class="num" style="left:271px;width:12px">1</i><i class="num" style="left:283px;width:12px">0</i><i class="op" style="left:295px;width:12px;transform:translateY(-2.5px) scaleY(1.08)">]</i><i class="op" style="left:319px;width:12px;transform:scaleX(0.8)">=</i><i class="str" style="left:343px;width:12px;transform:translate(-2px,-2px) skewX(-22deg)">"</i><i class="str" style="left:355px;width:12px;transform:scaleX(1.35)">j</i><i class="str" style="left:367px;width:12px;transform:scaleX(1.1)">e</i><i class="str" style="left:379px;width:12px;transform:scaleX(1.35)">r</i><i class="str" style="left:391px;width:12px;transform:scaleX(1.35)">r</i><i class="str" style="left:403px;width:12px;transform:scaleX(1.05)">y</i><i class="str" style="left:415px;width:12px;transform:translate(-2px,-2px) skewX(-22deg)">"</i><i class="op" style="left:427px;width:12px">;</i></div>
<div class="ln" style="top:229px">7</div>
<div class="cl" style="top:252px"></div>
<div class="ln" style="top:252px">8</div>
<div class="cl" style="top:275px"><i class="kw" style="left:171px;width:13px;transform:scaleX(1.55)">r</i><i class="kw" style="left:184px;width:13px;transform:scaleX(1.2)">e</i><i class="kw" style="left:197px;width:13px;transform:scaleX(1.45)">t</i><i class="kw" style="left:210px;width:13px;transform:scaleX(1.05)">u</i><i class="kw" style="left:223px;width:13px;transform:scaleX(1.55)">r</i><i class="kw" style="left:236px;width:13px;transform:scaleX(1.08)">n</i><i class="num" style="left:261px;width:12px">0</i><i class="op" style="left:273px;width:12px">;</i></div>
<div class="ln" style="top:275px">9</div>
<div class="cl" style="top:298px"><i class="op" style="left:123px;width:12px;transform:translateY(-2px) scaleX(0.6)">}</i></div>
<div class="ln" style="top:298px">10</div>
<div class="cl" style="top:321px"></div>
<div class="ln" style="top:321px">11</div>
<div class="a" style="left:467px;top:178px;width:711px;height:31px;background:#000"></div>
<div class="a wt" style="left:475px;top:186px">Watches</div>
<div class="a" style="left:1158px;top:186px;width:19px;height:19px;background:#c75050"></div>
<svg class="a" style="left:1158px;top:186px" width="19" height="19"><path d="M7 7 L12.2 12.2 M12.2 7 L7 12.2" stroke="#fff" stroke-width="1.7"/></svg>
<div class="a" style="left:467px;top:209px;width:711px;height:412px;background:#fff;border:1px solid #a0a0a0;border-top:none"></div>
<div class="a" style="left:469px;top:211px;width:16px;height:373px;background:#c8c8c8"></div>
<div class="a" style="left:469px;top:584px;width:707px;height:1px;background:#d0d0d0"></div>
<div class="a hl" style="top:232px"></div>
<div class="a wtx" style="left:489px;top:214px">Function arguments</div>
<div class="a hl" style="top:254px"></div>
<div class="a wtx" style="left:489px;top:236px">Locals</div>
<div class="a fb" style="left:472px;top:239px"></div>
<div class="a hl" style="top:276px"></div>
<div class="a wtx" style="left:510px;top:258px">a</div>
<div class="a wtx" style="left:757px;top:258px">&quot;jerry&quot;</div>
<div class="a hl" style="top:298px"></div>
<div class="a wtx red" style="left:510px;top:280px">b</div>
<div class="a wtx red" style="left:757px;top:280px">&quot;jer&quot;</div>
<div class="a hl" style="top:320px"></div>
<div class="a wtx" style="left:510px;top:302px">c</div>
<div class="a wtx" style="left:757px;top:302px">&quot;\000\000\000x#m\000\000\000&quot;</div>
<div class="a hl" style="top:342px"></div>
<div class="a wtx" style="left:489px;top:324px">/c a</div>
<div class="a fb" style="left:472px;top:327px"></div>
<div class="a hl" style="top:364px"></div>
<div class="a wtx" style="left:510px;top:346px">[0]</div>
<div class="a wtx" style="left:757px;top:346px">106 &#x27;j&#x27;</div>
<div class="a hl" style="top:386px"></div>
<div class="a wtx" style="left:510px;top:368px">[1]</div>
<div class="a wtx" style="left:757px;top:368px">101 &#x27;e&#x27;</div>
<div class="a hl" style="top:408px"></div>
<div class="a wtx" style="left:510px;top:390px">[2]</div>
<div class="a wtx" style="left:757px;top:390px">114 &#x27;r&#x27;</div>
<div class="a hl" style="top:430px"></div>
<div class="a wtx" style="left:510px;top:412px">[3]</div>
<div class="a wtx" style="left:757px;top:412px">114 &#x27;r&#x27;</div>
<div class="a hl" style="top:452px"></div>
<div class="a wtx" style="left:510px;top:434px">[4]</div>
<div class="a wtx" style="left:757px;top:434px">121 &#x27;y&#x27;</div>
<div class="a hl" style="top:474px"></div>
<div class="a wtx" style="left:510px;top:456px">[5]</div>
<div class="a wtx" style="left:757px;top:456px">0 &#x27;\000&#x27;</div>
<div class="a hl" style="top:496px"></div>
<div class="a wtx red" style="left:489px;top:478px">/c b</div>
<div class="a fb" style="left:472px;top:481px"></div>
<div class="a hl" style="top:518px"></div>
<div class="a wtx red" style="left:510px;top:500px">[0]</div>
<div class="a wtx red" style="left:757px;top:500px">106 &#x27;j&#x27;</div>
<div class="a hl" style="top:540px"></div>
<div class="a wtx red" style="left:510px;top:522px">[1]</div>
<div class="a wtx red" style="left:757px;top:522px">101 &#x27;e&#x27;</div>
<div class="a hl" style="top:562px"></div>
<div class="a wtx red" style="left:510px;top:544px">[2]</div>
<div class="a wtx red" style="left:757px;top:544px">114 &#x27;r&#x27;</div>
<div class="a" style="left:751px;top:211px;width:1px;height:352px;background:#c8c8c8"></div>
<div class="a" style="left:1033px;top:211px;width:1px;height:352px;background:#c8c8c8"></div>
<div class="a" style="left:485px;top:563px;width:266px;height:21px;background:#0078d7"></div>
<div class="a" style="left:489px;top:565px;width:1px;height:17px;background:#d08840"></div>
<div class="a" style="left:1034px;top:563px;width:142px;height:21px;background:#0078d7"></div>
<div class="a" style="left:751px;top:584px;width:261px;height:1px;background:#c8c8c8"></div>
<div class="a" style="left:1012px;top:563px;width:20px;height:21px;background:#e1e1e1;border:1px solid #adadad"></div>
<div class="a" style="left:1012px;top:568px;width:20px;font-size:11px;text-align:center;color:#000;font-weight:bold">...</div>

<svg class="a" style="left:0;top:0" width="1185" height="629">
<defs><radialGradient id="bp" cx="0.45" cy="0.35" r="0.7"><stop offset="0" stop-color="#f07070"/><stop offset="0.6" stop-color="#d42a2a"/><stop offset="1" stop-color="#b01818"/></radialGradient></defs>
<circle cx="94" cy="194" r="7.6" fill="url(#bp)"/>
<path d="M91.5 232.5 L98.5 239.5 L91.5 246.5 Z" fill="#ffff00" stroke="#1a1a1a" stroke-width="1"/>
<rect x="108.5" y="164.5" width="12" height="12" fill="#fff" stroke="#808080"/>
<rect x="111" y="170" width="7" height="1" fill="#808080"/>
<rect x="114" y="177" width="1" height="154" fill="#808080"/>
<rect x="114" y="331" width="7" height="1" fill="#808080"/>
</svg>


<svg class="a" style="left:0;top:0" width="1185" height="629">
<polygon points="436.80,27.94 470.60,460.88 467.40,461.12 435.20,28.06" fill="#ea1c24"/>
<path d="M465 459.5 L469.3 461.5 L474 459 L469.6 470 Z" fill="#ea1c24"/>
</svg>

</body></html>
